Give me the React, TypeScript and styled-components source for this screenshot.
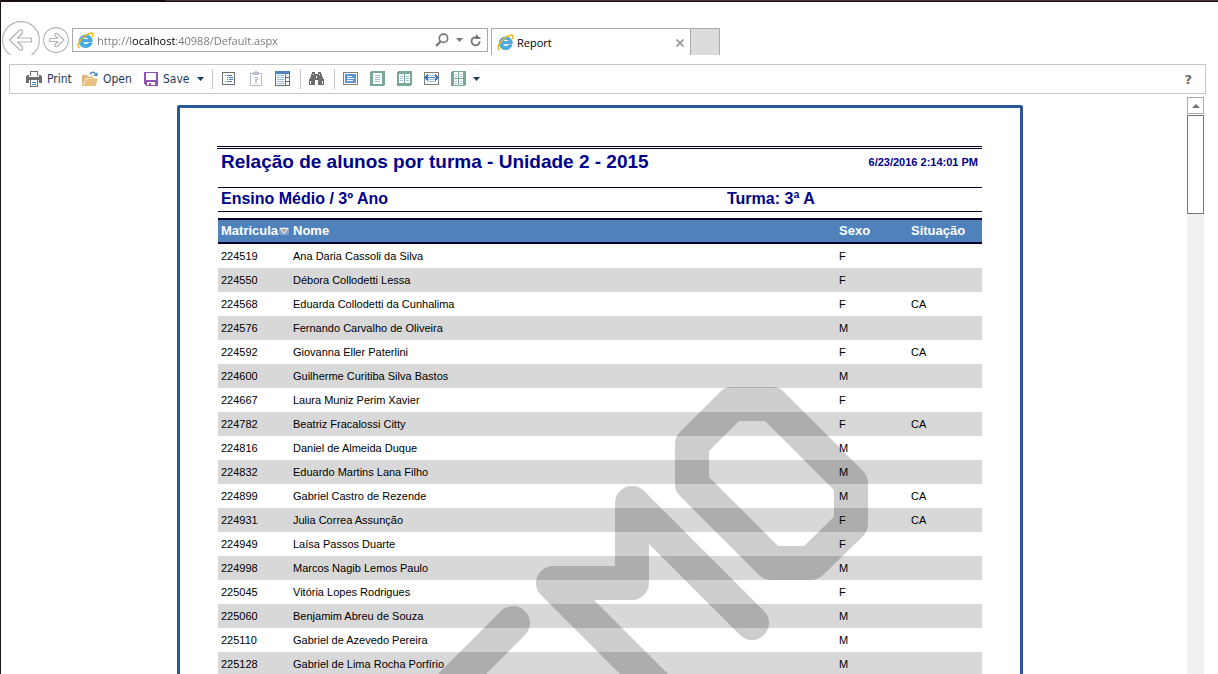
import React from "react";
import styled, { createGlobalStyle } from "styled-components";

const GlobalStyle = createGlobalStyle`
  * { box-sizing: border-box; }
  body {
    margin: 0;
    background: #fff;
    font-family: "Open Sans", "Noto Sans", sans-serif;
    font-size: 11px;
  }
  button {
    border: 0;
    padding: 0;
    margin: 0;
    background: none;
    font: inherit;
    color: inherit;
    cursor: pointer;
  }
  svg { display: block; flex: none; }
`;

const Window = styled.div`
  height: 100vh;
  display: flex;
  flex-direction: column;
  overflow: hidden;
  border-left: 1px solid #1b1512;
`;

const TitleEdge = styled.div`
  flex: none;
  height: 2px;
  background: linear-gradient(90deg, #120b08 165px, #4b3a33 165px);
  border-bottom: 1px solid #1d1211;
`;

const BrowserBar = styled.header`
  flex: none;
  height: 53px;
  padding: 19px 0 0 1px;
  display: flex;
  align-items: flex-start;
  overflow: hidden;
`;

const NavButton = styled.button<{ $size: number }>`
  flex: none;
  width: ${(p) => p.$size}px;
  height: 38px;
  && { margin-right: 3px; }
  display: flex;
  align-items: center;
  justify-content: center;
`;

const AddressBox = styled.form`
  width: 416px;
  height: 24px;
  margin: 7px 3px 0 0;
  padding: 0 5px 0 4px;
  display: flex;
  align-items: center;
  gap: 3px;
  border: 1px solid #ababab;
`;

const AddressActions = styled.div`
  display: flex;
  align-items: center;
  gap: 7px;
`;

const AddressInput = styled.input`
  flex: 1;
  min-width: 0;
  height: 20px;
  padding: 0;
  border: 0;
  outline: 0;
  font: inherit;
  color: #6d6d6d;
  background: linear-gradient(90deg, #757575 34px, #000 34px, #000 78px, #757575 78px);
  -webkit-background-clip: text;
  background-clip: text;
  -webkit-text-fill-color: transparent;
`;

const Tab = styled.div`
  width: 200px;
  height: 28px;
  margin-top: 7px;
  padding: 0 5px 0 5px;
  display: flex;
  align-items: center;
  gap: 3px;
  border: 1px solid #ababab;
  border-bottom: 0;
`;

const TabTitle = styled.span`
  flex: 1;
  color: #000;
`;

const NewTab = styled.button`
  width: 29px;
  height: 28px;
  && {
    margin-top: 7px;
    background: #dcdcdc;
    border: 1px solid #ababab;
    border-left: 0;
    border-bottom: 0;
  }
`;

const Toolbar = styled.nav`
  flex: none;
  height: 30px;
  margin: 9px 12px 0 8px;
  padding: 0 13px 0 16px;
  display: flex;
  align-items: center;
  border: 1px solid #c6c6c6;
  color: #1a3b5c;
  font-family: "DejaVu Sans Condensed", "DejaVu Sans", sans-serif;
  font-size: 12px;
`;

const FileActions = styled.div`
  display: flex;
  gap: 10px;
  margin-right: 4px;
`;

const TextButton = styled.button<{ $width: number }>`
  width: ${(p) => p.$width}px;
  height: 22px;
  display: flex;
  align-items: center;
  gap: 5px;
  white-space: nowrap;
`;

const ButtonLabel = styled.span`
  flex: 1;
  text-align: left;
`;

const IconButton = styled.button`
  flex: none;
  width: 27px;
  height: 22px;
  && { padding: 0 5px 0 6px; }
`;

const ArrowButton = styled.button`
  width: 8px;
  height: 22px;
  && { padding: 0 0 0 1px; }
`;

const Separator = styled.span`
  flex: none;
  width: 1px;
  height: 20px;
  margin: 0 2px 0 4px;
  background: #c6c6c6;
`;

const HelpButton = styled.button`
  && {
    margin-left: auto;
    color: #6d6d6d;
    font: bold 13px "DejaVu Sans", sans-serif;
  }
`;

const Viewer = styled.main`
  flex: 1;
  min-height: 0;
  margin-top: 3px;
  display: flex;
`;

const Canvas = styled.div`
  flex: 1;
  min-width: 0;
  padding: 8px 0 0 12px;
  display: flex;
  justify-content: center;
  overflow: hidden;
`;

const Paper = styled.article`
  position: relative;
  width: 846px;
  min-height: 1190px;
  padding: 38px 38px 0 37px;
  border: 3px solid #2b579a;
  border-radius: 2px;
  font-family: "Liberation Sans", Arial, sans-serif;
`;

const TitleBand = styled.div`
  height: 41px;
  padding: 0 4px;
  display: flex;
  justify-content: space-between;
  align-items: flex-start;
  border-top: 3px double #000028;
  color: #00008b;
`;

const Title = styled.h1`
  margin: 0;
  font-size: 19px;
  line-height: 26px;
`;

const Stamp = styled.time`
  font-size: 11px;
  font-weight: bold;
  line-height: 26px;
`;

const GroupBand = styled.div`
  height: 25px;
  padding: 0 3px;
  margin: 0 0 6px 1px;
  display: grid;
  grid-template-columns: 506px 1fr;
  border-top: 1px solid #000028;
  border-bottom: 1px solid #000028;
  color: #00008b;
`;

const GroupTitle = styled.h2`
  margin: 0;
  font-size: 16px;
  line-height: 22px;
`;

const Roster = styled.table`
  width: 764px;
  margin-left: 1px;
  table-layout: fixed;
  border-collapse: separate;
  border-spacing: 0;
`;

const Col = styled.col<{ $width?: number }>`
  width: ${(p) => (p.$width ? `${p.$width}px` : "auto")};
`;

const HeadCell = styled.th`
  height: 26px;
  padding: 0 0 0 3px;
  text-align: left;
  white-space: nowrap;
  font-size: 13px;
  line-height: 20px;
  color: #fff;
  background: #4f81bd;
  border-top: 2px solid #000028;
  border-bottom: 2px solid #000028;
`;

const SortLabel = styled.span`
  display: flex;
  align-items: center;
`;

const Row = styled.tr<{ $shaded: boolean }>`
  background: ${(p) => (p.$shaded ? "#d8d8d8" : "#fff")};
`;

const Cell = styled.td`
  height: 24px;
  padding: 0 0 0 3px;
  font-size: 11px;
  line-height: 24px;
  color: #000;
  white-space: nowrap;
`;

const Watermark = styled.svg`
  position: absolute;
  inset: 0;
  pointer-events: none;
`;

const ScrollTrack = styled.div`
  flex: none;
  width: 17px;
  margin-right: 14px;
  display: flex;
  flex-direction: column;
  gap: 1px;
  background: linear-gradient(#fff 60px, #f1f1f1 60px);
`;

const ScrollUp = styled.button`
  height: 17px;
  display: flex;
  align-items: center;
  justify-content: center;
  && { border: 1px solid #ababab; background: #fff; }
`;

const ScrollThumb = styled.div`
  height: 99px;
  border: 1px solid #767676;
  background: #fff;
`;

const IELogo = () => (
  <svg width="17" height="17" viewBox="0 0 17 17" aria-hidden="true">
    <path d="M15.300 9.800H5.700C5.900 11.600 7.100 12.500 8.900 12.500C10.300 12.500 11.300 12 11.900 11.100H15C14.100 13.900 11.800 15.600 8.800 15.600C4.900 15.600 2.200 13 2.200 9.300C2.200 5.600 5 2.900 8.900 2.900C12.900 2.900 15.500 5.700 15.300 9.800ZM5.800 7.600H11.900C11.600 6.100 10.500 5.300 8.900 5.300C7.200 5.300 6.100 6.100 5.800 7.600Z" fill="#48b0e6" fillRule="evenodd" stroke="#1e7fc2" strokeWidth=".6" />
    <path d="M2.200 15.600C-.3 13.600 2.600 8.400 6.600 5C10.600 1.500 14.700 .2 15.800 1.600C16.300 2.400 16 3.600 15.400 4.700" fill="none" stroke="#f0b81c" strokeWidth="1.500" strokeLinecap="round" />
  </svg>
);

const NavArrow = ({ size, back }: { size: number; back?: boolean }) => (
  <svg width={size} height={size} viewBox={`0 0 ${size} ${size}`} fill="none" stroke="#b4b4b4" aria-hidden="true">
    <circle cx={size / 2} cy={size / 2} r={size / 2 - 0.6} strokeWidth="1.100" />
    {back ? (
      <path d="M7.500 19L17.500 9.200H20.500V12.200L15.500 17H29.500V21H15.500L20.500 25.800V28.800H17.500Z" strokeWidth="1.200" strokeLinejoin="round" />
    ) : (
      <path d="M21 13L14 6.500H12V8.500L15 11.500H6.500V14.500H15L12 17.500V19.500H14Z" strokeWidth="1.200" strokeLinejoin="round" />
    )}
  </svg>
);

const Caret = ({ color }: { color: string }) => (
  <svg width="7" height="4" viewBox="0 0 7 4" aria-hidden="true">
    <path d="M0 0H7L3.500 4Z" fill={color} />
  </svg>
);

const SearchIcon = () => (
  <svg width="14" height="14" viewBox="0 0 14 14" fill="none" stroke="#757575" aria-hidden="true">
    <circle cx="8.500" cy="5.300" r="4.200" strokeWidth="1.600" />
    <path d="M5.500 8.500L1 13" strokeWidth="2.200" />
  </svg>
);

const RefreshIcon = () => (
  <svg width="12" height="13" viewBox="0 0 12 13" aria-hidden="true">
    <path d="M7 3.400A4.100 4.100 0 1 0 9.700 7.300" fill="none" stroke="#757575" strokeWidth="1.800" />
    <path d="M6 0L10.500 4.500H6Z" fill="#757575" />
    <path d="M5 3.500H10.500V5H5Z" fill="#757575" />
  </svg>
);

const Icon = ({ children, width = 16 }: { children: React.ReactNode; width?: number }) => (
  <svg width={width} height="16" viewBox={`0 0 ${width} 16`} shapeRendering="crispEdges" aria-hidden="true">
    {children}
  </svg>
);

const PrintIcon = () => (
  <Icon>
    <path d="M4.500 5V.5H11.500V5" fill="none" stroke="#6d6d6d" />
    <path d="M0 5H1V4H3V6H13V4H15V5H16V12H13V9H3V12H0Z" fill="#6d6d6d" />
    <path d="M4.500 9V15.500H11.500V9" fill="#fff" stroke="#6d6d6d" />
    <path d="M6 11.500H10M6 13.500H10" stroke="#4a82bd" />
  </Icon>
);

const OpenIcon = () => (
  <svg width="16" height="16" viewBox="0 0 16 16" aria-hidden="true">
    <path d="M0 15V4H5L6 5.500H11V7H4L1 13V15Z" fill="#dcb67a" />
    <path d="M1 15L4.500 7.500H16L13.500 15Z" fill="#e8bf80" />
    <path d="M8 3.500C9 .5 12 .3 13.500 3" fill="none" stroke="#4a82bd" strokeWidth="1.300" />
    <path d="M15.500 1V5H11.500Z" fill="#4a82bd" />
  </svg>
);

const SaveIcon = () => (
  <Icon width={15}>
    <path d="M1 1H15V15H3L1 13Z" fill="#8e55b0" />
    <path d="M3 2H13V9H3ZM4 11H12V14H8V12H6V14H4Z" fill="#fff" />
  </Icon>
);

const BookmarksIcon = () => (
  <Icon>
    <rect x="1.500" y="1.500" width="12" height="12" fill="#fff" stroke="#6d6d6d" />
    <path d="M4 4.500H5M6 4.500H11M6 6.500H7M8 6.500H12M6 8.500H7M8 8.500H12M4 10.500H5M6 10.500H11" stroke="#4a82bd" />
  </Icon>
);

const ParametersIcon = () => (
  <Icon>
    <rect x="2.500" y="2.500" width="11" height="12" fill="#fff" stroke="#bcc0cc" />
    <path d="M5 1H7V0H9V1H11V4H5Z" fill="#bcc0cc" />
    <path d="M6 7V6H10V9H9V11H7V8H9V7ZM7 12H9V13H7Z" fill="#bcc0cc" />
  </Icon>
);

const ResourcesIcon = () => (
  <Icon>
    <path d="M.5 3V14.500H14.500V3M10.500 3V14M11 6.500H15M11 10.500H15" fill="none" stroke="#6d6d6d" />
    <rect width="15" height="3" fill="#4a82bd" />
    <path d="M2 4.500H9M2 6.500H9M2 8.500H9M2 10.500H9M2 12.500H9" stroke="#9dbbdd" />
  </Icon>
);

const FindIcon = () => (
  <Icon>
    <path d="M3 1H6V3H9V1H12V3H13V5L15 9V14H9V9H6V14H0V9L2 5V3H3Z" fill="#6d6d6d" />
    <path d="M4.500 3V4M10.500 3V4M7.500 5V7M1.500 10V13M13.500 10V13" stroke="#fff" />
  </Icon>
);

const FullScreenIcon = () => (
  <Icon>
    <rect x=".5" y="1.500" width="14" height="12" fill="#fff" stroke="#808080" />
    <rect x="2" y="3" width="11" height="9" fill="#5b97d8" />
    <path d="M4 5.500H9M4 7.500H11M4 9.500H10" stroke="#fff" />
  </Icon>
);

const OnePageIcon = () => (
  <Icon>
    <rect width="15" height="15" rx="2" fill="#76a797" />
    <rect x="3" y="2" width="9" height="11" fill="#fff" />
    <path d="M5 4.500H10M5 6.500H10M5 8.500H10M5 10.500H10" stroke="#a3bedd" />
  </Icon>
);

const TwoPagesIcon = () => (
  <Icon>
    <rect width="15" height="15" rx="2" fill="#76a797" />
    <path d="M2 3H7V12H2ZM8 3H13V12H8Z" fill="#fff" />
    <path d="M3 5.500H6M3 7.500H6M3 9.500H6M9 5.500H12M9 7.500H12M9 9.500H12" stroke="#a3bedd" />
  </Icon>
);

const PageWidthIcon = () => (
  <Icon>
    <rect x=".5" y="1.500" width="14" height="12" fill="#fff" stroke="#808080" />
    <path d="M4 4.500H11M4 8.500H11M4 10.500H11" stroke="#a3bedd" />
    <path d="M0 6.500L4 3V10ZM15 6.500L11 3V10ZM3 6H12V7H3Z" fill="#3f78b8" />
  </Icon>
);

const MultiPageIcon = () => (
  <Icon>
    <rect width="15" height="15" rx="2" fill="#76a797" />
    <path d="M3 1H7V7H3ZM8 1H12V7H8ZM3 8H7V14H3ZM8 8H12V14H8Z" fill="#fff" />
    <path d="M4 3.500H6M4 5.500H6M9 3.500H11M9 5.500H11M4 10.500H6M4 12.500H6M9 10.500H11M9 12.500H11" stroke="#a3bedd" />
  </Icon>
);

const SortIcon = () => (
  <svg width="12" height="12" viewBox="0 0 12 12" aria-hidden="true">
    <rect x="1" y="2" width="10" height="8" rx="3" fill="#fff" opacity=".3" />
    <path d="M2 3.500H10L6 8.500Z" fill="#a9a9a9" stroke="#f2f2f2" />
  </svg>
);

type Student = [id: string, name: string, sex: string, status?: string];

const students: Student[] = [
  ["224519", "Ana Daria Cassoli da Silva", "F"],
  ["224550", "Débora Collodetti Lessa", "F"],
  ["224568", "Eduarda Collodetti da Cunhalima", "F", "CA"],
  ["224576", "Fernando Carvalho de Oliveira", "M"],
  ["224592", "Giovanna Eller Paterlini", "F", "CA"],
  ["224600", "Guilherme Curitiba Silva Bastos", "M"],
  ["224667", "Laura Muniz Perim Xavier", "F"],
  ["224782", "Beatriz Fracalossi Citty", "F", "CA"],
  ["224816", "Daniel de Almeida Duque", "M"],
  ["224832", "Eduardo Martins Lana Filho", "M"],
  ["224899", "Gabriel Castro de Rezende", "M", "CA"],
  ["224931", "Julia Correa Assunção", "F", "CA"],
  ["224949", "Laísa Passos Duarte", "F"],
  ["224998", "Marcos Nagib Lemos Paulo", "M"],
  ["225045", "Vitória Lopes Rodrigues", "F"],
  ["225060", "Benjamim Abreu de Souza", "M"],
  ["225110", "Gabriel de Azevedo Pereira", "M"],
  ["225128", "Gabriel de Lima Rocha Porfírio", "M"],
];

export default function App() {
  return (
    <Window>
      <GlobalStyle />
      <TitleEdge />
      <BrowserBar>
        <NavButton $size={38} aria-label="Back"><NavArrow size={38} back /></NavButton>
        <NavButton $size={26} aria-label="Forward"><NavArrow size={26} /></NavButton>
        <AddressBox onSubmit={(e) => e.preventDefault()}>
          <IELogo />
          <AddressInput aria-label="Address" defaultValue="http://localhost:40988/Default.aspx" />
          <AddressActions>
            <button type="submit" aria-label="Search"><SearchIcon /></button>
            <button type="button" aria-label="Address history"><Caret color="#757575" /></button>
            <button type="button" aria-label="Refresh"><RefreshIcon /></button>
          </AddressActions>
        </AddressBox>
        <Tab>
          <IELogo />
          <TabTitle>Report</TabTitle>
          <button aria-label="Close tab">
            <svg width="10" height="10" viewBox="0 0 10 10" aria-hidden="true">
              <path d="M1.500 1.500L8.500 8.500M8.500 1.500L1.500 8.500" stroke="#a0a0a0" strokeWidth="1.800" />
            </svg>
          </button>
        </Tab>
        <NewTab aria-label="New tab" />
      </BrowserBar>

      <Toolbar>
        <FileActions>
          <TextButton $width={46}><PrintIcon /><ButtonLabel>Print</ButtonLabel></TextButton>
          <TextButton $width={51}><OpenIcon /><ButtonLabel>Open</ButtonLabel></TextButton>
          <TextButton $width={61}><SaveIcon /><ButtonLabel>Save</ButtonLabel><Caret color="#1a3b5c" /></TextButton>
        </FileActions>
        <Separator />
        <IconButton aria-label="Bookmarks"><BookmarksIcon /></IconButton>
        <IconButton aria-label="Parameters"><ParametersIcon /></IconButton>
        <IconButton aria-label="Resources"><ResourcesIcon /></IconButton>
        <Separator />
        <IconButton aria-label="Find"><FindIcon /></IconButton>
        <Separator />
        <IconButton aria-label="Full screen"><FullScreenIcon /></IconButton>
        <IconButton aria-label="One page"><OnePageIcon /></IconButton>
        <IconButton aria-label="Two pages"><TwoPagesIcon /></IconButton>
        <IconButton aria-label="Page width"><PageWidthIcon /></IconButton>
        <IconButton aria-label="Multiple pages"><MultiPageIcon /></IconButton>
        <ArrowButton aria-label="View mode"><Caret color="#1a3b5c" /></ArrowButton>
        <HelpButton>?</HelpButton>
      </Toolbar>

      <Viewer>
        <Canvas>
          <Paper>
            <TitleBand>
              <Title>Relação de alunos por turma - Unidade 2 - 2015</Title>
              <Stamp>6/23/2016 2:14:01 PM</Stamp>
            </TitleBand>
            <GroupBand>
              <GroupTitle>Ensino Médio / 3º Ano</GroupTitle>
              <GroupTitle>Turma: 3ª A</GroupTitle>
            </GroupBand>
            <Roster>
              <colgroup>
                <Col $width={72} />
                <Col />
                <Col $width={72} />
                <Col $width={74} />
              </colgroup>
              <thead>
                <tr>
                  <HeadCell><SortLabel>Matricula<SortIcon /></SortLabel></HeadCell>
                  <HeadCell>Nome</HeadCell>
                  <HeadCell>Sexo</HeadCell>
                  <HeadCell>Situação</HeadCell>
                </tr>
              </thead>
              <tbody>
                {students.map(([id, name, sex, status], i) => (
                  <Row key={id} $shaded={i % 2 === 1}>
                    <Cell>{id}</Cell>
                    <Cell>{name}</Cell>
                    <Cell>{sex}</Cell>
                    <Cell>{status}</Cell>
                  </Row>
                ))}
              </tbody>
            </Roster>
            <Watermark width="840" height="800" viewBox="0 0 840 800" fill="none" stroke="#000" strokeOpacity=".196" strokeWidth="34" strokeLinecap="round" strokeLinejoin="round" aria-hidden="true">
              <path d="M552 296H592L671 375V416L631 455H591L512 376V336Z" />
              <path d="M572 515L452 395V475H373L493 595" />
              <path d="M333 515L213 635" />
            </Watermark>
          </Paper>
        </Canvas>
        <ScrollTrack>
          <ScrollUp aria-label="Scroll up">
            <svg width="8" height="4" viewBox="0 0 8 4" aria-hidden="true"><path d="M0 4L4 0L8 4Z" fill="#767676" /></svg>
          </ScrollUp>
          <ScrollThumb />
        </ScrollTrack>
      </Viewer>
    </Window>
  );
}
